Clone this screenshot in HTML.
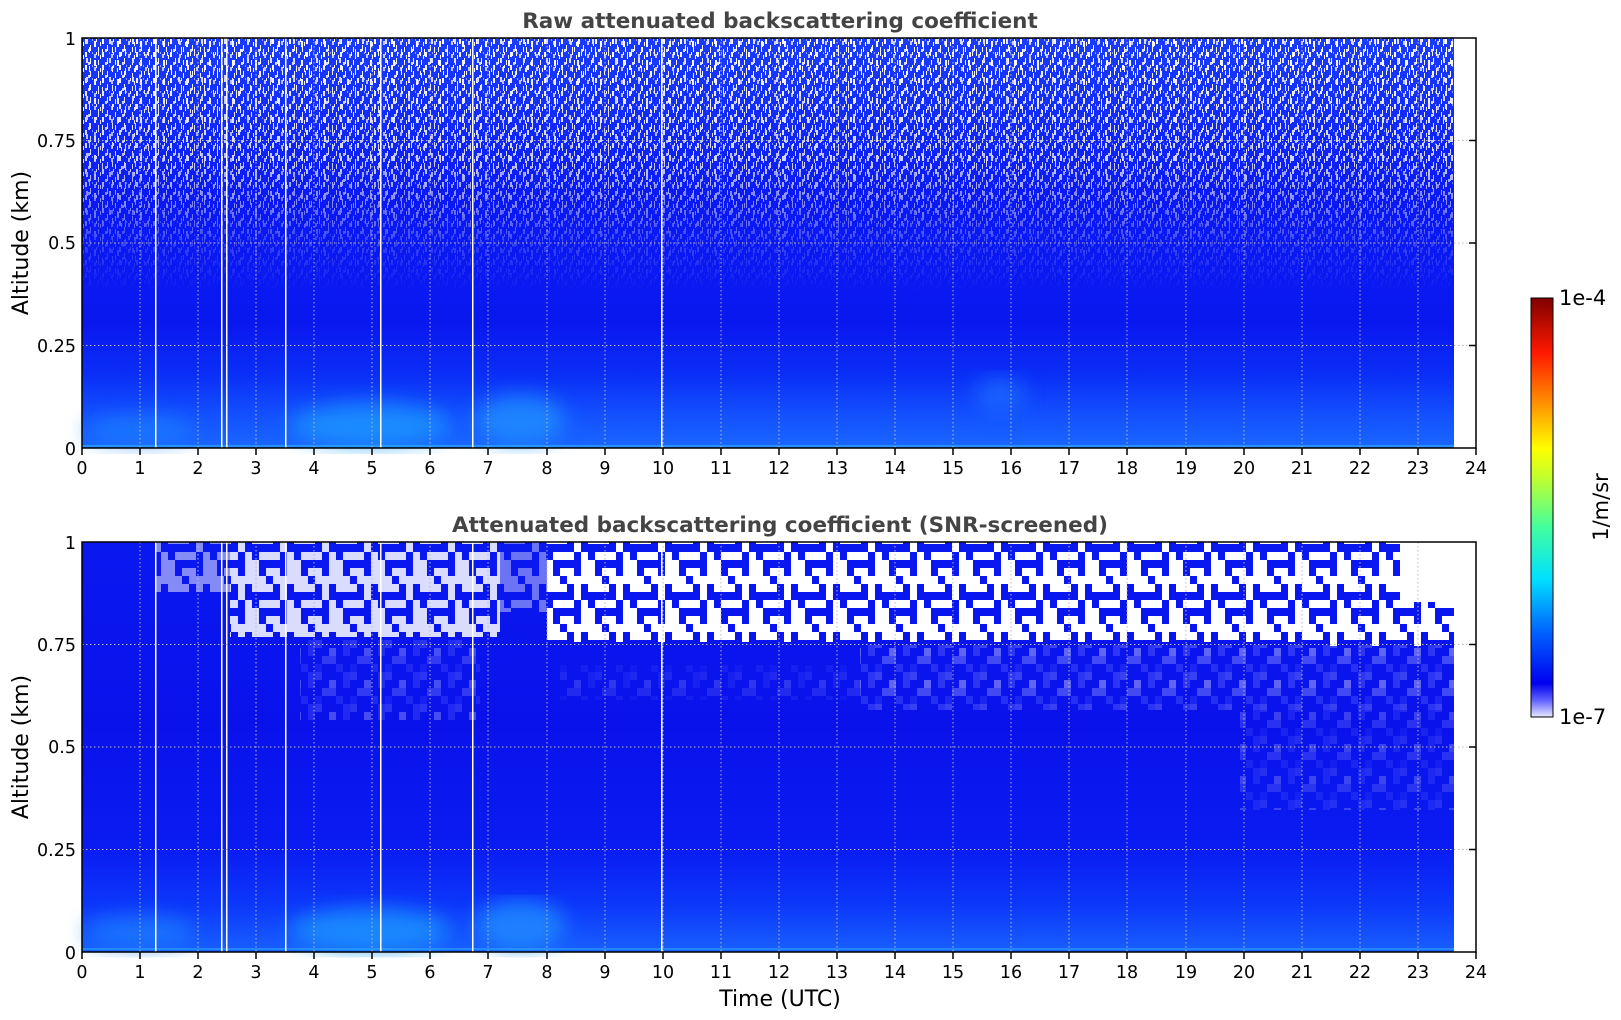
<!DOCTYPE html>
<html><head><meta charset="utf-8"><style>
html,body{margin:0;padding:0;background:#fff;}
svg{display:block;}
text{font-family:"DejaVu Sans","Liberation Sans",sans-serif;}
</style></head><body>
<svg width="1621" height="1020" viewBox="0 0 1621 1020" xmlns="http://www.w3.org/2000/svg">
<defs>
  <pattern id="spk" width="17" height="13" patternUnits="userSpaceOnUse">
    <rect x="0" y="0" width="2" height="5" fill="#fff"/>
    <rect x="5" y="6" width="1" height="6" fill="#fff"/>
    <rect x="9" y="2" width="2" height="4" fill="#c8ccff"/>
    <rect x="13" y="8" width="1" height="5" fill="#fff"/>
    <rect x="3" y="10" width="2" height="3" fill="#dfe2ff"/>
    <rect x="11" y="0" width="1" height="3" fill="#fff"/>
    <rect x="15" y="3" width="1" height="4" fill="#fff"/>
    <rect x="7" y="0" width="1" height="2" fill="#9aa4ff"/>
  </pattern>
  <pattern id="spk2" width="23" height="19" patternUnits="userSpaceOnUse">
    <rect x="2" y="3" width="2" height="6" fill="#fff"/>
    <rect x="10" y="11" width="1" height="7" fill="#fff"/>
    <rect x="17" y="1" width="2" height="5" fill="#e0e3ff"/>
    <rect x="6" y="14" width="1" height="4" fill="#fff"/>
    <rect x="20" y="9" width="1" height="6" fill="#fff"/>
  </pattern>
  <linearGradient id="spkfade" x1="0" y1="0" x2="0" y2="1">
    <stop offset="0" stop-color="#fff" stop-opacity="1"/>
    <stop offset="0.3" stop-color="#fff" stop-opacity="0.8"/>
    <stop offset="0.5" stop-color="#fff" stop-opacity="0.2"/>
    <stop offset="0.62" stop-color="#fff" stop-opacity="0"/>
  </linearGradient>
  <mask id="mspk"><rect x="82" y="38" width="1372" height="410" fill="url(#spkfade)"/></mask>
  <linearGradient id="topbg" x1="0" y1="0" x2="0" y2="1">
    <stop offset="0" stop-color="#1a3cff"/>
    <stop offset="0.4" stop-color="#0a18f4"/>
    <stop offset="0.7" stop-color="#0a18f0"/>
    <stop offset="0.82" stop-color="#0a2ef6"/>
    <stop offset="0.93" stop-color="#1454ff"/>
    <stop offset="1" stop-color="#1a66ff"/>
  </linearGradient>
  <linearGradient id="botbg" x1="0" y1="0" x2="0" y2="1">
    <stop offset="0" stop-color="#0a18f0"/>
    <stop offset="0.45" stop-color="#0a12ec"/>
    <stop offset="0.75" stop-color="#0a1cf2"/>
    <stop offset="0.88" stop-color="#0c36fa"/>
    <stop offset="1" stop-color="#1860ff"/>
  </linearGradient>
  <pattern id="blob" width="42" height="48" patternUnits="userSpaceOnUse">
    <rect x="0" y="0" width="14" height="16" fill="#fff"/>
    <rect x="21" y="0" width="21" height="8" fill="#fff"/>
    <rect x="28" y="8" width="7" height="16" fill="#fff"/>
    <rect x="7" y="24" width="21" height="8" fill="#fff"/>
    <rect x="0" y="32" width="7" height="16" fill="#fff"/>
    <rect x="35" y="24" width="7" height="24" fill="#fff"/>
    <rect x="14" y="40" width="14" height="8" fill="#fff"/>
    <rect x="14" y="8" width="7" height="8" fill="#fff"/>
  </pattern>
  <pattern id="lav" width="35" height="32" patternUnits="userSpaceOnUse">
    <rect x="0" y="0" width="7" height="8" fill="#8f96ff"/>
    <rect x="14" y="8" width="7" height="8" fill="#fff"/>
    <rect x="28" y="0" width="7" height="16" fill="#6a74ff"/>
    <rect x="7" y="16" width="14" height="8" fill="#a8adff"/>
    <rect x="21" y="24" width="7" height="8" fill="#5a66ff"/>
    <rect x="0" y="24" width="7" height="8" fill="#3a48ff"/>
  </pattern>
  <filter id="bl"><feGaussianBlur stdDeviation="10"/></filter>
  <linearGradient id="cbar" x1="0" y1="1" x2="0" y2="0">
    <stop offset="0" stop-color="#e8e8ff"/>
    <stop offset="0.04" stop-color="#6060ff"/>
    <stop offset="0.08" stop-color="#0000f0"/>
    <stop offset="0.2" stop-color="#0060ff"/>
    <stop offset="0.33" stop-color="#00e0ff"/>
    <stop offset="0.45" stop-color="#40ffa0"/>
    <stop offset="0.57" stop-color="#c0ff30"/>
    <stop offset="0.64" stop-color="#ffff00"/>
    <stop offset="0.75" stop-color="#ff9000"/>
    <stop offset="0.87" stop-color="#ff1800"/>
    <stop offset="1" stop-color="#800000"/>
  </linearGradient>
</defs>

<!-- ========== TOP PLOT ========== -->
<rect x="82" y="38" width="1372" height="410" fill="url(#topbg)"/>
<g filter="url(#bl)" opacity="0.7">
  <ellipse cx="370" cy="425" rx="80" ry="22" fill="#1aa0ff"/>
  <ellipse cx="520" cy="420" rx="45" ry="25" fill="#2098ff"/>
  <ellipse cx="1000" cy="395" rx="25" ry="18" fill="#1a70ff"/>
  <ellipse cx="140" cy="430" rx="55" ry="14" fill="#1a80ff"/>
</g>
<g mask="url(#mspk)">
  <rect x="82" y="38" width="1372" height="410" fill="url(#spk)"/>
  <rect x="82" y="38" width="1372" height="410" fill="url(#spk2)"/>
</g>
<rect x="82" y="445" width="1372" height="2" fill="#30b0ff" opacity="0.6"/>
<g fill="#fff">
  <rect x="155" y="38" width="1.5" height="410"/>
  <rect x="221" y="38" width="1.5" height="410"/>
  <rect x="226" y="38" width="1.5" height="410"/>
  <rect x="285" y="38" width="1.5" height="410"/>
  <rect x="380" y="38" width="1.5" height="410"/>
  <rect x="472" y="38" width="1.5" height="410"/>
  <rect x="661" y="38" width="1.5" height="410"/>
</g>
<g stroke="#bbb" stroke-width="1" stroke-dasharray="1.5,2.5">
  <line x1="82" y1="140.5" x2="1476" y2="140.5"/>
  <line x1="82" y1="243" x2="1476" y2="243"/>
  <line x1="82" y1="345.5" x2="1476" y2="345.5"/>
  <line x1="140" y1="38" x2="140" y2="448"/><line x1="198" y1="38" x2="198" y2="448"/><line x1="256" y1="38" x2="256" y2="448"/><line x1="314" y1="38" x2="314" y2="448"/><line x1="372" y1="38" x2="372" y2="448"/><line x1="430" y1="38" x2="430" y2="448"/><line x1="488" y1="38" x2="488" y2="448"/><line x1="547" y1="38" x2="547" y2="448"/><line x1="605" y1="38" x2="605" y2="448"/><line x1="663" y1="38" x2="663" y2="448"/><line x1="721" y1="38" x2="721" y2="448"/><line x1="779" y1="38" x2="779" y2="448"/><line x1="837" y1="38" x2="837" y2="448"/><line x1="895" y1="38" x2="895" y2="448"/><line x1="953" y1="38" x2="953" y2="448"/><line x1="1011" y1="38" x2="1011" y2="448"/><line x1="1069" y1="38" x2="1069" y2="448"/><line x1="1127" y1="38" x2="1127" y2="448"/><line x1="1186" y1="38" x2="1186" y2="448"/><line x1="1244" y1="38" x2="1244" y2="448"/><line x1="1302" y1="38" x2="1302" y2="448"/><line x1="1360" y1="38" x2="1360" y2="448"/><line x1="1418" y1="38" x2="1418" y2="448"/>
</g>
<rect x="82" y="38" width="1394" height="410" fill="none" stroke="#000" stroke-width="1.5"/>
<g stroke="#000" stroke-width="1.5">
  <line x1="82" y1="448" x2="82" y2="455"/><line x1="140" y1="448" x2="140" y2="455"/><line x1="198" y1="448" x2="198" y2="455"/><line x1="256" y1="448" x2="256" y2="455"/><line x1="314" y1="448" x2="314" y2="455"/><line x1="372" y1="448" x2="372" y2="455"/><line x1="430" y1="448" x2="430" y2="455"/><line x1="488" y1="448" x2="488" y2="455"/><line x1="547" y1="448" x2="547" y2="455"/><line x1="605" y1="448" x2="605" y2="455"/><line x1="663" y1="448" x2="663" y2="455"/><line x1="721" y1="448" x2="721" y2="455"/><line x1="779" y1="448" x2="779" y2="455"/><line x1="837" y1="448" x2="837" y2="455"/><line x1="895" y1="448" x2="895" y2="455"/><line x1="953" y1="448" x2="953" y2="455"/><line x1="1011" y1="448" x2="1011" y2="455"/><line x1="1069" y1="448" x2="1069" y2="455"/><line x1="1127" y1="448" x2="1127" y2="455"/><line x1="1186" y1="448" x2="1186" y2="455"/><line x1="1244" y1="448" x2="1244" y2="455"/><line x1="1302" y1="448" x2="1302" y2="455"/><line x1="1360" y1="448" x2="1360" y2="455"/><line x1="1418" y1="448" x2="1418" y2="455"/><line x1="1476" y1="448" x2="1476" y2="455"/>
  <line x1="1469" y1="140.5" x2="1476" y2="140.5"/><line x1="1469" y1="243" x2="1476" y2="243"/><line x1="1469" y1="345.5" x2="1476" y2="345.5"/>
</g>
<g font-size="17.5" text-anchor="end" fill="#000">
  <text x="76" y="45">1</text><text x="76" y="147">0.75</text><text x="76" y="249">0.5</text><text x="76" y="352">0.25</text><text x="76" y="455">0</text>
</g>
<g font-size="17.5" text-anchor="middle" fill="#000">
  <text x="82" y="474">0</text><text x="140" y="474">1</text><text x="198" y="474">2</text><text x="256" y="474">3</text><text x="314" y="474">4</text><text x="372" y="474">5</text><text x="430" y="474">6</text><text x="488" y="474">7</text><text x="547" y="474">8</text><text x="605" y="474">9</text><text x="663" y="474">10</text><text x="721" y="474">11</text><text x="779" y="474">12</text><text x="837" y="474">13</text><text x="895" y="474">14</text><text x="953" y="474">15</text><text x="1011" y="474">16</text><text x="1069" y="474">17</text><text x="1127" y="474">18</text><text x="1186" y="474">19</text><text x="1244" y="474">20</text><text x="1302" y="474">21</text><text x="1360" y="474">22</text><text x="1418" y="474">23</text><text x="1476" y="474">24</text>
</g>
<text x="780" y="28" font-size="21.5" font-weight="bold" fill="#444" text-anchor="middle">Raw attenuated backscattering coefficient</text>
<text transform="translate(28,243) rotate(-90)" font-size="22" text-anchor="middle" fill="#000">Altitude (km)</text>

<!-- ========== BOTTOM PLOT ========== -->
<rect x="82" y="542" width="1372" height="410" fill="url(#botbg)"/>
<g filter="url(#bl)" opacity="0.7">
  <ellipse cx="370" cy="930" rx="80" ry="22" fill="#1aa0ff"/>
  <ellipse cx="520" cy="925" rx="45" ry="25" fill="#2098ff"/>
  <ellipse cx="140" cy="932" rx="55" ry="16" fill="#1a80ff"/>
</g>
<rect x="300" y="640" width="180" height="80" fill="url(#lav)" opacity="0.25"/>
<rect x="860" y="645" width="594" height="65" fill="url(#lav)" opacity="0.35"/>
<rect x="1240" y="710" width="214" height="100" fill="url(#lav)" opacity="0.2"/>
<rect x="560" y="665" width="300" height="35" fill="url(#lav)" opacity="0.15"/>
<!-- white blob region -->
<rect x="547" y="542" width="907" height="100" fill="url(#blob)"/>
<rect x="1400" y="542" width="54" height="60" fill="#fff"/>
<rect x="1300" y="600" width="154" height="46" fill="url(#blob)"/>
<rect x="230" y="542" width="270" height="95" fill="url(#blob)" opacity="0.85"/>
<rect x="155" y="542" width="75" height="50" fill="url(#blob)" opacity="0.5"/>
<rect x="500" y="542" width="47" height="70" fill="url(#blob)" opacity="0.4"/>
<rect x="82" y="948" width="1372" height="2" fill="#30b0ff" opacity="0.5"/>
<g fill="#fff">
  <rect x="155" y="542" width="1.5" height="410"/>
  <rect x="221" y="542" width="1.5" height="410"/>
  <rect x="226" y="542" width="1.5" height="410"/>
  <rect x="285" y="542" width="1.5" height="410"/>
  <rect x="380" y="542" width="1.5" height="410"/>
  <rect x="472" y="542" width="1.5" height="410"/>
  <rect x="661" y="542" width="1.5" height="410"/>
</g>
<g stroke="#bbb" stroke-width="1" stroke-dasharray="1.5,2.5">
  <line x1="82" y1="644.5" x2="1476" y2="644.5"/>
  <line x1="82" y1="747" x2="1476" y2="747"/>
  <line x1="82" y1="849.5" x2="1476" y2="849.5"/>
  <line x1="140" y1="542" x2="140" y2="952"/><line x1="198" y1="542" x2="198" y2="952"/><line x1="256" y1="542" x2="256" y2="952"/><line x1="314" y1="542" x2="314" y2="952"/><line x1="372" y1="542" x2="372" y2="952"/><line x1="430" y1="542" x2="430" y2="952"/><line x1="488" y1="542" x2="488" y2="952"/><line x1="547" y1="542" x2="547" y2="952"/><line x1="605" y1="542" x2="605" y2="952"/><line x1="663" y1="542" x2="663" y2="952"/><line x1="721" y1="542" x2="721" y2="952"/><line x1="779" y1="542" x2="779" y2="952"/><line x1="837" y1="542" x2="837" y2="952"/><line x1="895" y1="542" x2="895" y2="952"/><line x1="953" y1="542" x2="953" y2="952"/><line x1="1011" y1="542" x2="1011" y2="952"/><line x1="1069" y1="542" x2="1069" y2="952"/><line x1="1127" y1="542" x2="1127" y2="952"/><line x1="1186" y1="542" x2="1186" y2="952"/><line x1="1244" y1="542" x2="1244" y2="952"/><line x1="1302" y1="542" x2="1302" y2="952"/><line x1="1360" y1="542" x2="1360" y2="952"/><line x1="1418" y1="542" x2="1418" y2="952"/>
</g>
<rect x="82" y="542" width="1394" height="410" fill="none" stroke="#000" stroke-width="1.5"/>
<g stroke="#000" stroke-width="1.5">
  <line x1="82" y1="952" x2="82" y2="959"/><line x1="140" y1="952" x2="140" y2="959"/><line x1="198" y1="952" x2="198" y2="959"/><line x1="256" y1="952" x2="256" y2="959"/><line x1="314" y1="952" x2="314" y2="959"/><line x1="372" y1="952" x2="372" y2="959"/><line x1="430" y1="952" x2="430" y2="959"/><line x1="488" y1="952" x2="488" y2="959"/><line x1="547" y1="952" x2="547" y2="959"/><line x1="605" y1="952" x2="605" y2="959"/><line x1="663" y1="952" x2="663" y2="959"/><line x1="721" y1="952" x2="721" y2="959"/><line x1="779" y1="952" x2="779" y2="959"/><line x1="837" y1="952" x2="837" y2="959"/><line x1="895" y1="952" x2="895" y2="959"/><line x1="953" y1="952" x2="953" y2="959"/><line x1="1011" y1="952" x2="1011" y2="959"/><line x1="1069" y1="952" x2="1069" y2="959"/><line x1="1127" y1="952" x2="1127" y2="959"/><line x1="1186" y1="952" x2="1186" y2="959"/><line x1="1244" y1="952" x2="1244" y2="959"/><line x1="1302" y1="952" x2="1302" y2="959"/><line x1="1360" y1="952" x2="1360" y2="959"/><line x1="1418" y1="952" x2="1418" y2="959"/><line x1="1476" y1="952" x2="1476" y2="959"/>
  <line x1="1469" y1="644.5" x2="1476" y2="644.5"/><line x1="1469" y1="747" x2="1476" y2="747"/><line x1="1469" y1="849.5" x2="1476" y2="849.5"/>
</g>
<g font-size="17.5" text-anchor="end" fill="#000">
  <text x="76" y="549">1</text><text x="76" y="651">0.75</text><text x="76" y="753">0.5</text><text x="76" y="856">0.25</text><text x="76" y="959">0</text>
</g>
<g font-size="17.5" text-anchor="middle" fill="#000">
  <text x="82" y="978">0</text><text x="140" y="978">1</text><text x="198" y="978">2</text><text x="256" y="978">3</text><text x="314" y="978">4</text><text x="372" y="978">5</text><text x="430" y="978">6</text><text x="488" y="978">7</text><text x="547" y="978">8</text><text x="605" y="978">9</text><text x="663" y="978">10</text><text x="721" y="978">11</text><text x="779" y="978">12</text><text x="837" y="978">13</text><text x="895" y="978">14</text><text x="953" y="978">15</text><text x="1011" y="978">16</text><text x="1069" y="978">17</text><text x="1127" y="978">18</text><text x="1186" y="978">19</text><text x="1244" y="978">20</text><text x="1302" y="978">21</text><text x="1360" y="978">22</text><text x="1418" y="978">23</text><text x="1476" y="978">24</text>
</g>
<text x="780" y="532" font-size="21.5" font-weight="bold" fill="#444" text-anchor="middle">Attenuated backscattering coefficient (SNR-screened)</text>
<text transform="translate(28,747) rotate(-90)" font-size="22" text-anchor="middle" fill="#000">Altitude (km)</text>
<text x="780" y="1006" font-size="22" text-anchor="middle" fill="#000">Time (UTC)</text>

<!-- ========== COLORBAR ========== -->
<rect x="1531" y="298" width="22" height="419" fill="url(#cbar)" stroke="#000" stroke-width="1"/>
<text x="1559" y="305" font-size="21" fill="#000">1e-4</text>
<text x="1559" y="724" font-size="21" fill="#000">1e-7</text>
<text transform="translate(1608,507) rotate(-90)" font-size="21" text-anchor="middle" fill="#000">1/m/sr</text>
</svg>
</body></html>
